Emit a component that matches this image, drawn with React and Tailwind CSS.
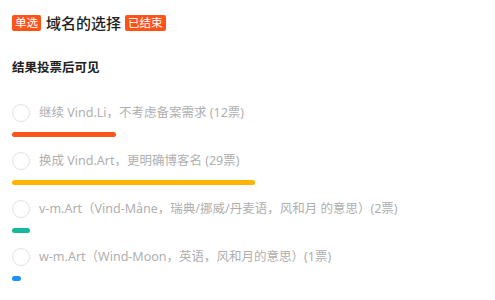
import React from 'react';

const options = [
  { label: '继续 Vind.Li，不考虑备案需求 (12票)', width: 104, color: 'bg-[#ff5419]' },
  { label: '换成 Vind.Art，更明确博客名 (29票)', width: 243, color: 'bg-[#ffb400]' },
  { label: 'v-m.Art（Vind-Måne，瑞典/挪威/丹麦语，风和月 的意思）(2票)', width: 18, color: 'bg-[#16b99c]' },
  { label: 'w-m.Art（Wind-Moon，英语，风和月的意思）(1票)', width: 9, color: 'bg-[#1e8fff]' },
];

export default function App() {
  return (
    <div
      className="w-[495px] h-[300px] bg-white pl-[12px] pt-[15px] overflow-hidden"
      style={{ fontFamily: '"Noto Sans", "Noto Sans CJK SC", sans-serif' }}
    >
      {/* Header */}
      <div className="flex items-center h-[16px]">
        <span className="bg-[#ff5419] text-white text-[11.5px] leading-[16px] px-[3px] rounded-[2px]">单选</span>
        <span className="ml-[5px] text-[15px] font-medium text-[#222] leading-[16px]">域名的选择</span>
        <span className="ml-[4px] bg-[#ff5419] text-white text-[11.5px] leading-[16px] px-[3px] rounded-[2px]">已结束</span>
      </div>

      <div className="mt-[28px] text-[12.5px] font-bold text-[#222] leading-[18px]">结果投票后可见</div>

      <div className="mt-[27px] flex flex-col gap-[15px]">
        {options.map((o, i) => (
          <div key={i}>
            <div className="flex items-center gap-[9px]">
              <span className="w-[18px] h-[18px] rounded-full border border-[#e3e3e3] shrink-0" />
              <span className="text-[12.5px] text-[#afafaf] leading-[18px] whitespace-nowrap">{o.label}</span>
            </div>
            <div className={`mt-[10px] h-[5px] rounded-full ${o.color}`} style={{ width: o.width }} />
          </div>
        ))}
      </div>
    </div>
  );
}
